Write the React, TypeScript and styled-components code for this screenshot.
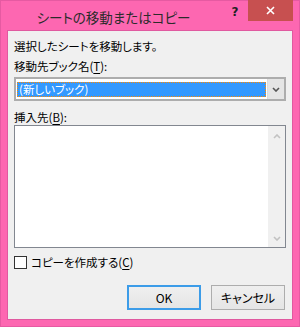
import React from "react";
import styled, { createGlobalStyle } from "styled-components";

const Global = createGlobalStyle`
  html, body { margin: 0; padding: 0; background: #fff; }
  * { box-sizing: border-box; }
`;

const FONT = `"Noto Sans CJK JP", "Noto Sans", sans-serif`;

const Window = styled.div`
  width: 300px;
  height: 327px;
  background: #fd67b1;
  border: 1px solid #e65aa2;
  display: flex;
  flex-direction: column;
  font-family: ${FONT};
  font-feature-settings: "palt";
  color: #000;
`;

const TitleBar = styled.div`
  height: 29px;
  display: flex;
  align-items: flex-start;
`;

const Title = styled.div`
  flex: 1;
  text-align: center;
  font-size: 13.5px;
  line-height: 29px;
  padding-top: 2px;
  color: #2b2b2b;
`;

const Help = styled.div`
  width: 18px;
  margin-right: 4px;
  text-align: center;
  font-family: "DejaVu Sans", sans-serif;
  font-weight: bold;
  font-size: 12px;
  line-height: 22px;
  color: #222;
`;

const Close = styled.div`
  width: 45px;
  height: 21px;
  margin-top: -1px;
  margin-right: 6px;
  background: #c75050;
  display: flex;
  align-items: center;
  justify-content: center;
`;

const Client = styled.div`
  flex: 1;
  margin: 0 6px 6px 6px;
  border: 1px solid #e05aa0;
  background: #f0f0f0;
  padding: 5px 6px 0 6px;
  display: flex;
  flex-direction: column;
  font-size: 11.5px;
`;

const Label = styled.div`
  line-height: 20px;
  height: 20px;
  white-space: nowrap;
`;

const Key = styled.span`
  text-decoration: underline;
  text-underline-offset: 2px;
`;

const Combo = styled.div`
  margin-top: 1px;
  height: 24px;
  border: 2px solid #adadad;
  background: #fff;
  display: flex;
`;

const Selected = styled.div`
  flex: 1;
  margin: 3px 1px 2px 1px;
  background: #3399ff;
  border: 1px dotted #ff8a00;
  color: #fff;
  line-height: 13px;
  padding-left: 1px;
  white-space: nowrap;
`;

const DropButton = styled.div`
  width: 17px;
  background: #e5e5e5;
  border-left: 1px solid #dcdcdc;
  display: flex;
  align-items: center;
  justify-content: center;
`;

const ListLabel = styled.div`
  margin-top: 8px;
  height: 16px;
  line-height: 16px;
  white-space: nowrap;
`;

const ListBox = styled.div`
  height: 123px;
  border: 1px solid #828790;
  background: #fff;
  display: flex;
  justify-content: flex-end;
`;

const ScrollBar = styled.div`
  width: 17px;
  background: #f0f0f0;
  display: flex;
  flex-direction: column;
  justify-content: space-between;
  align-items: center;
  padding: 8px 0 6px 0;
`;

const CheckRow = styled.div`
  margin-top: 8px;
  height: 13px;
  display: flex;
  align-items: center;
`;

const CheckBox = styled.div`
  width: 13px;
  height: 13px;
  border: 1px solid #333;
  background: #fff;
`;

const CheckLabel = styled.span`
  margin-left: 4px;
  line-height: 13px;
  white-space: nowrap;
`;

const ButtonRow = styled.div`
  margin-top: 16px;
  display: flex;
  justify-content: flex-end;
  gap: 10px;
  padding-right: 1px;
`;

const Button = styled.div<{ $default?: boolean }>`
  width: 74px;
  height: 25px;
  border: ${(p) => (p.$default ? "2px solid #3c9ce8" : "1px solid #adadad")};
  background: linear-gradient(#efefef, #e5e5e5);
  display: flex;
  align-items: center;
  justify-content: center;
  font-size: 12px;
  color: #000;
`;

const Chevron = ({ dir, color }: { dir: "up" | "down"; color: string }) => (
  <svg width="8" height="5" viewBox="0 0 8 5">
    <path
      d={dir === "down" ? "M1 1 L4 4 L7 1" : "M1 4 L4 1 L7 4"}
      fill="none"
      stroke={color}
      strokeWidth="1.6"
    />
  </svg>
);

export default function App() {
  return (
    <>
      <Global />
      <Window>
        <TitleBar>
          <Title>シートの移動またはコピー</Title>
          <Help>?</Help>
          <Close>
            <svg width="9" height="9" viewBox="0 0 9 9">
              <path d="M1 1 L8 8 M8 1 L1 8" stroke="#fff" strokeWidth="1.6" />
            </svg>
          </Close>
        </TitleBar>
        <Client>
          <Label>選択したシートを移動します。</Label>
          <Label>
            移動先ブック名(<Key>T</Key>):
          </Label>
          <Combo>
            <Selected>(新しいブック)</Selected>
            <DropButton>
              <Chevron dir="down" color="#555" />
            </DropButton>
          </Combo>
          <ListLabel>
            挿入先(<Key>B</Key>):
          </ListLabel>
          <ListBox>
            <ScrollBar>
              <Chevron dir="up" color="#c2c2c2" />
              <Chevron dir="down" color="#c2c2c2" />
            </ScrollBar>
          </ListBox>
          <CheckRow>
            <CheckBox />
            <CheckLabel>
              コピーを作成する(<Key>C</Key>)
            </CheckLabel>
          </CheckRow>
          <ButtonRow>
            <Button $default>OK</Button>
            <Button>キャンセル</Button>
          </ButtonRow>
        </Client>
      </Window>
    </>
  );
}
